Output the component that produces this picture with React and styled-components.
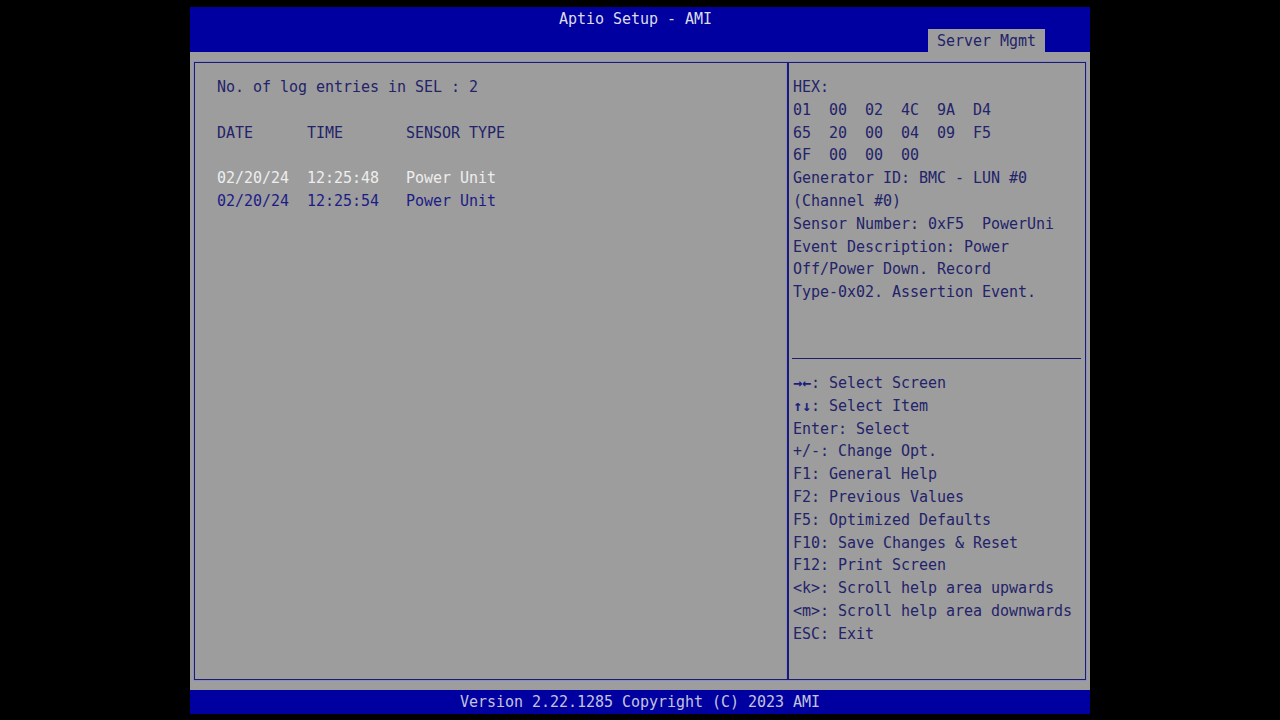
import styled, { createGlobalStyle } from "styled-components";

const GlobalStyle = createGlobalStyle`
  html, body {
    margin: 0;
    padding: 0;
    background: #000;
  }
  * {
    box-sizing: border-box;
  }
`;

const BLUE = "#0000a0";
const GRAY = "#9d9d9d";
const INK = "#23236a";
const LINE = "#1c1c6c";
const GLOW = "#8c8cc8";
const ROW = "22.8px";

const Page = styled.div`
  width: 1280px;
  height: 720px;
  padding-top: 7px;
  display: flex;
  justify-content: center;
  font-family: "DejaVu Sans Mono", "Liberation Mono", monospace;
  font-size: 15px;
  letter-spacing: -0.03px;
`;

const Screen = styled.div`
  width: 900px;
  height: 707px;
  display: flex;
  flex-direction: column;
`;

const Header = styled.header`
  height: 45px;
  background: ${BLUE};
  display: flex;
  flex-direction: column;
`;

const Title = styled.div`
  height: 22px;
  padding-top: 1px;
  line-height: 22px;
  text-align: center;
  padding-right: 9px;
  color: #dcdce8;
`;

const TabRow = styled.div`
  height: 23px;
  display: flex;
  justify-content: flex-end;
  padding-right: 45px;
`;

const Tab = styled.div`
  width: 117px;
  height: 23px;
  padding-top: 1px;
  line-height: 22px;
  background: ${GRAY};
  color: ${INK};
  text-align: center;
`;

const Body = styled.main`
  flex: 1;
  background: ${GRAY};
  padding: 10px 4px 10px 4px;
  display: flex;
`;

const Frame = styled.div`
  flex: 1;
  display: grid;
  grid-template-columns: 592px 1fr;
  border: 1px solid ${LINE};
  box-shadow: 0 0 0 1px ${GLOW};
`;

const LeftPanel = styled.section`
  padding: 13px 0 0 22px;
  line-height: ${ROW};
  color: ${INK};
  white-space: pre;
`;

const Line = styled.div`
  height: ${ROW};
  color: ${(p) => p.$color || "inherit"};
`;

const Arrows = styled.span`
  font-weight: bold;
  color: #1c1c80;
`;

const RightPanel = styled.aside`
  border-left: 2px solid ${LINE};
  box-shadow: -1px 0 0 ${GLOW};
  padding: 13px 4px 0 4px;
  display: flex;
  flex-direction: column;
  color: ${INK};
  line-height: ${ROW};
  white-space: pre;
`;

const Info = styled.div`
  height: 283px;
  margin-left: -1px;
  padding-left: 1px;
  border-bottom: 1px solid ${LINE};
`;

const Help = styled.div`
  margin-top: 13px;
`;

const Footer = styled.footer`
  height: 24px;
  line-height: 24px;
  background: ${BLUE};
  color: #c4c4dc;
  text-align: center;
`;

const info = [
  "HEX:",
  "01  00  02  4C  9A  D4",
  "65  20  00  04  09  F5",
  "6F  00  00  00",
  "Generator ID: BMC - LUN #0",
  "(Channel #0)",
  "Sensor Number: 0xF5  PowerUni",
  "Event Description: Power",
  "Off/Power Down. Record",
  "Type-0x02. Assertion Event.",
];

const help = [
  { keys: "\u2192\u2190", text: ": Select Screen" },
  { keys: "\u2191\u2193", text: ": Select Item" },
  { text: "Enter: Select" },
  { text: "+/-: Change Opt." },
  { text: "F1: General Help" },
  { text: "F2: Previous Values" },
  { text: "F5: Optimized Defaults" },
  { text: "F10: Save Changes & Reset" },
  { text: "F12: Print Screen" },
  { text: "<k>: Scroll help area upwards" },
  { text: "<m>: Scroll help area downwards" },
  { text: "ESC: Exit" },
];

const entries = [
  { date: "02/20/24", time: "12:25:48", type: "Power Unit", color: "#eeeeee" },
  { date: "02/20/24", time: "12:25:54", type: "Power Unit", color: "#1c1c86" },
];

export default function App() {
  return (
    <>
      <GlobalStyle />
      <Page>
        <Screen>
          <Header>
            <Title>Aptio Setup - AMI</Title>
            <TabRow>
              <Tab>Server Mgmt</Tab>
            </TabRow>
          </Header>
          <Body>
            <Frame>
              <LeftPanel>
                <Line>No. of log entries in SEL : 2</Line>
                <Line />
                <Line>{"DATE      TIME       SENSOR TYPE"}</Line>
                <Line />
                {entries.map((e, i) => (
                  <Line key={i} $color={e.color}>
                    {`${e.date}  ${e.time}   ${e.type}`}
                  </Line>
                ))}
              </LeftPanel>
              <RightPanel>
                <Info>
                  {info.map((t, i) => (
                    <Line key={i}>{t}</Line>
                  ))}
                </Info>
                <Help>
                  {help.map((h, i) => (
                    <Line key={i}>
                      {h.keys && <Arrows>{h.keys}</Arrows>}
                      {h.text}
                    </Line>
                  ))}
                </Help>
              </RightPanel>
            </Frame>
          </Body>
          <Footer>Version 2.22.1285 Copyright (C) 2023 AMI</Footer>
        </Screen>
      </Page>
    </>
  );
}
